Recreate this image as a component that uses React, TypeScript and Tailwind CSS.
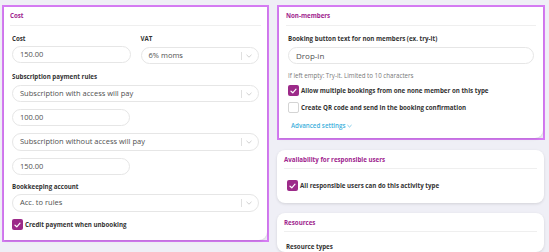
import React from "react";

const font = { fontFamily: '"Open Sans", "Noto Sans", sans-serif' };

function Check({ checked }: { checked: boolean }) {
  if (checked) {
    return (
      <span className="flex h-[11px] w-[11px] shrink-0 items-center justify-center rounded-[2px] bg-[#9c2a89]">
        <svg width="7" height="6" viewBox="0 0 7 6" fill="none">
          <path d="M1 3.2 L2.8 4.8 L6 1.2" stroke="white" strokeWidth="1.2" strokeLinecap="round" strokeLinejoin="round" />
        </svg>
      </span>
    );
  }
  return <span className="h-[11px] w-[11px] shrink-0 rounded-[2px] border border-[#d4d4d4] bg-white" />;
}

function Input({ value, className = "" }: { value: string; className?: string }) {
  return (
    <div className={`flex h-[17px] items-center rounded-full border border-[#e6e6e6] bg-white pl-[7px] text-[7.5px] text-[#505050] ${className}`}>
      {value}
    </div>
  );
}

function Select({ value, className = "" }: { value: string; className?: string }) {
  return (
    <div className={`flex h-[17px] items-center rounded-full border border-[#e6e6e6] bg-white pl-[7px] pr-[5px] text-[7.5px] text-[#505050] ${className}`}>
      <span className="flex-1">{value}</span>
      <span className="h-[8px] w-px bg-[#e0e0e0]" />
      <svg className="ml-[4px] mr-[1px]" width="6" height="4" viewBox="0 0 6 4" fill="none">
        <path d="M0.5 0.8 L3 3.2 L5.5 0.8" stroke="#c4c4c4" strokeWidth="0.8" />
      </svg>
    </div>
  );
}

function Label({ children, className = "" }: { children: React.ReactNode; className?: string }) {
  return <div className={`h-[10px] text-[6.2px] font-bold leading-[10px] text-[#333] ${className}`}>{children}</div>;
}

function Header({ title, h = "h-[20px]" }: { title: string; h?: string }) {
  return (
    <div className={`flex ${h} items-center border-b border-[#efefef] text-[6.2px] font-bold text-[#a0248e]`}>
      {title}
    </div>
  );
}

export default function App() {
  return (
    <div style={font} className="flex h-[252px] w-[549px] gap-[8px] overflow-hidden bg-[#efeff6] pl-[2px] pt-[5px]">
      {/* Left column */}
      <div className="w-[267px] shrink-0">
        <div className="border-2 border-[#d67cf4]">
          <div className="rounded-br-lg bg-white shadow-sm">
            <div className="px-[6px]">
              <Header title="Cost" h="h-[19px]" />
            </div>
            <div className="flex flex-col px-[8px] pb-[10px] pt-[8px]">
              <div className="flex gap-[10px]">
                <div className="flex-1">
                  <Label>Cost</Label>
                  <Input value="150.00" className="mt-[2px]" />
                </div>
                <div className="flex-1">
                  <Label>VAT</Label>
                  <Select value="6% moms" className="mt-[3px]" />
                </div>
              </div>
              <Label className="mt-[8px]">Subscription payment rules</Label>
              <Select value="Subscription with access will pay" className="mt-[3px]" />
              <Input value="100.00" className="mt-[7px] w-[118px]" />
              <Select value="Subscription without access will pay" className="mt-[7px] h-[18px]" />
              <Input value="150.00" className="mt-[7px] w-[118px]" />
              <Label className="mt-[7px]">Bookkeeping account</Label>
              <Select value="Acc. to rules" className="mt-[2px] h-[18px]" />
              <div className="mt-[7px] flex items-center gap-[2px]">
                <Check checked />
                <span className="text-[6.2px] font-bold text-[#333]">Credit payment when unbooking</span>
              </div>
            </div>
          </div>
        </div>
      </div>

      {/* Right column */}
      <div className="flex w-[268px] shrink-0 flex-col gap-[10px]">
        <div className="border-2 border-[#d67cf4]">
          <div className="rounded-br-lg bg-white shadow-sm">
            <div className="px-[7px]">
              <Header title="Non-members" h="h-[19px]" />
            </div>
            <div className="flex flex-col px-[9px] pb-[8px] pt-[8px]">
              <Label>Booking button text for non members (ex. try-it)</Label>
              <Input value="Drop-in" className="mt-[3px] text-[8px]" />
              <div className="mt-[7px] h-[10px] text-[6.2px] leading-[10px] text-[#777]">
                If left empty: Try-it. Limited to 10 characters
              </div>
              <div className="mt-[4px] flex items-center gap-[2px]">
                <Check checked />
                <span className="text-[6.2px] font-bold text-[#333]">Allow multiple bookings from one none member on this type</span>
              </div>
              <div className="mt-[6px] flex items-center gap-[2px]">
                <Check checked={false} />
                <span className="text-[6.2px] font-bold text-[#333]">Create QR code and send in the booking confirmation</span>
              </div>
              <div className="mt-[8px] flex items-center gap-[2px] pl-[3px] text-[6.2px] font-semibold text-[#41b0dc]">
                Advanced settings
                <svg width="5" height="4" viewBox="0 0 6 4" fill="none">
                  <path d="M0.5 0.8 L3 3.2 L5.5 0.8" stroke="#41b0dc" strokeWidth="0.8" />
                </svg>
              </div>
            </div>
          </div>
        </div>

        <div className="mr-[1px] rounded-lg bg-white shadow-[0_1px_3px_rgba(0,0,0,0.12)]">
          <div className="px-[7px]">
            <Header title="Availability for responsible users" h="h-[19px]" />
          </div>
          <div className="flex items-center gap-[2px] px-[10px] pb-[12px] pt-[11px]">
            <Check checked />
            <span className="text-[6.2px] font-bold text-[#333]">All responsible users can do this activity type</span>
          </div>
        </div>

        <div className="mr-[1px] rounded-lg bg-white shadow-[0_1px_3px_rgba(0,0,0,0.12)]">
          <div className="px-[7px]">
            <Header title="Resources" h="h-[19px]" />
          </div>
          <div className="px-[9px] pt-[10px]">
            <Label>Resource types</Label>
          </div>
        </div>
      </div>
    </div>
  );
}
